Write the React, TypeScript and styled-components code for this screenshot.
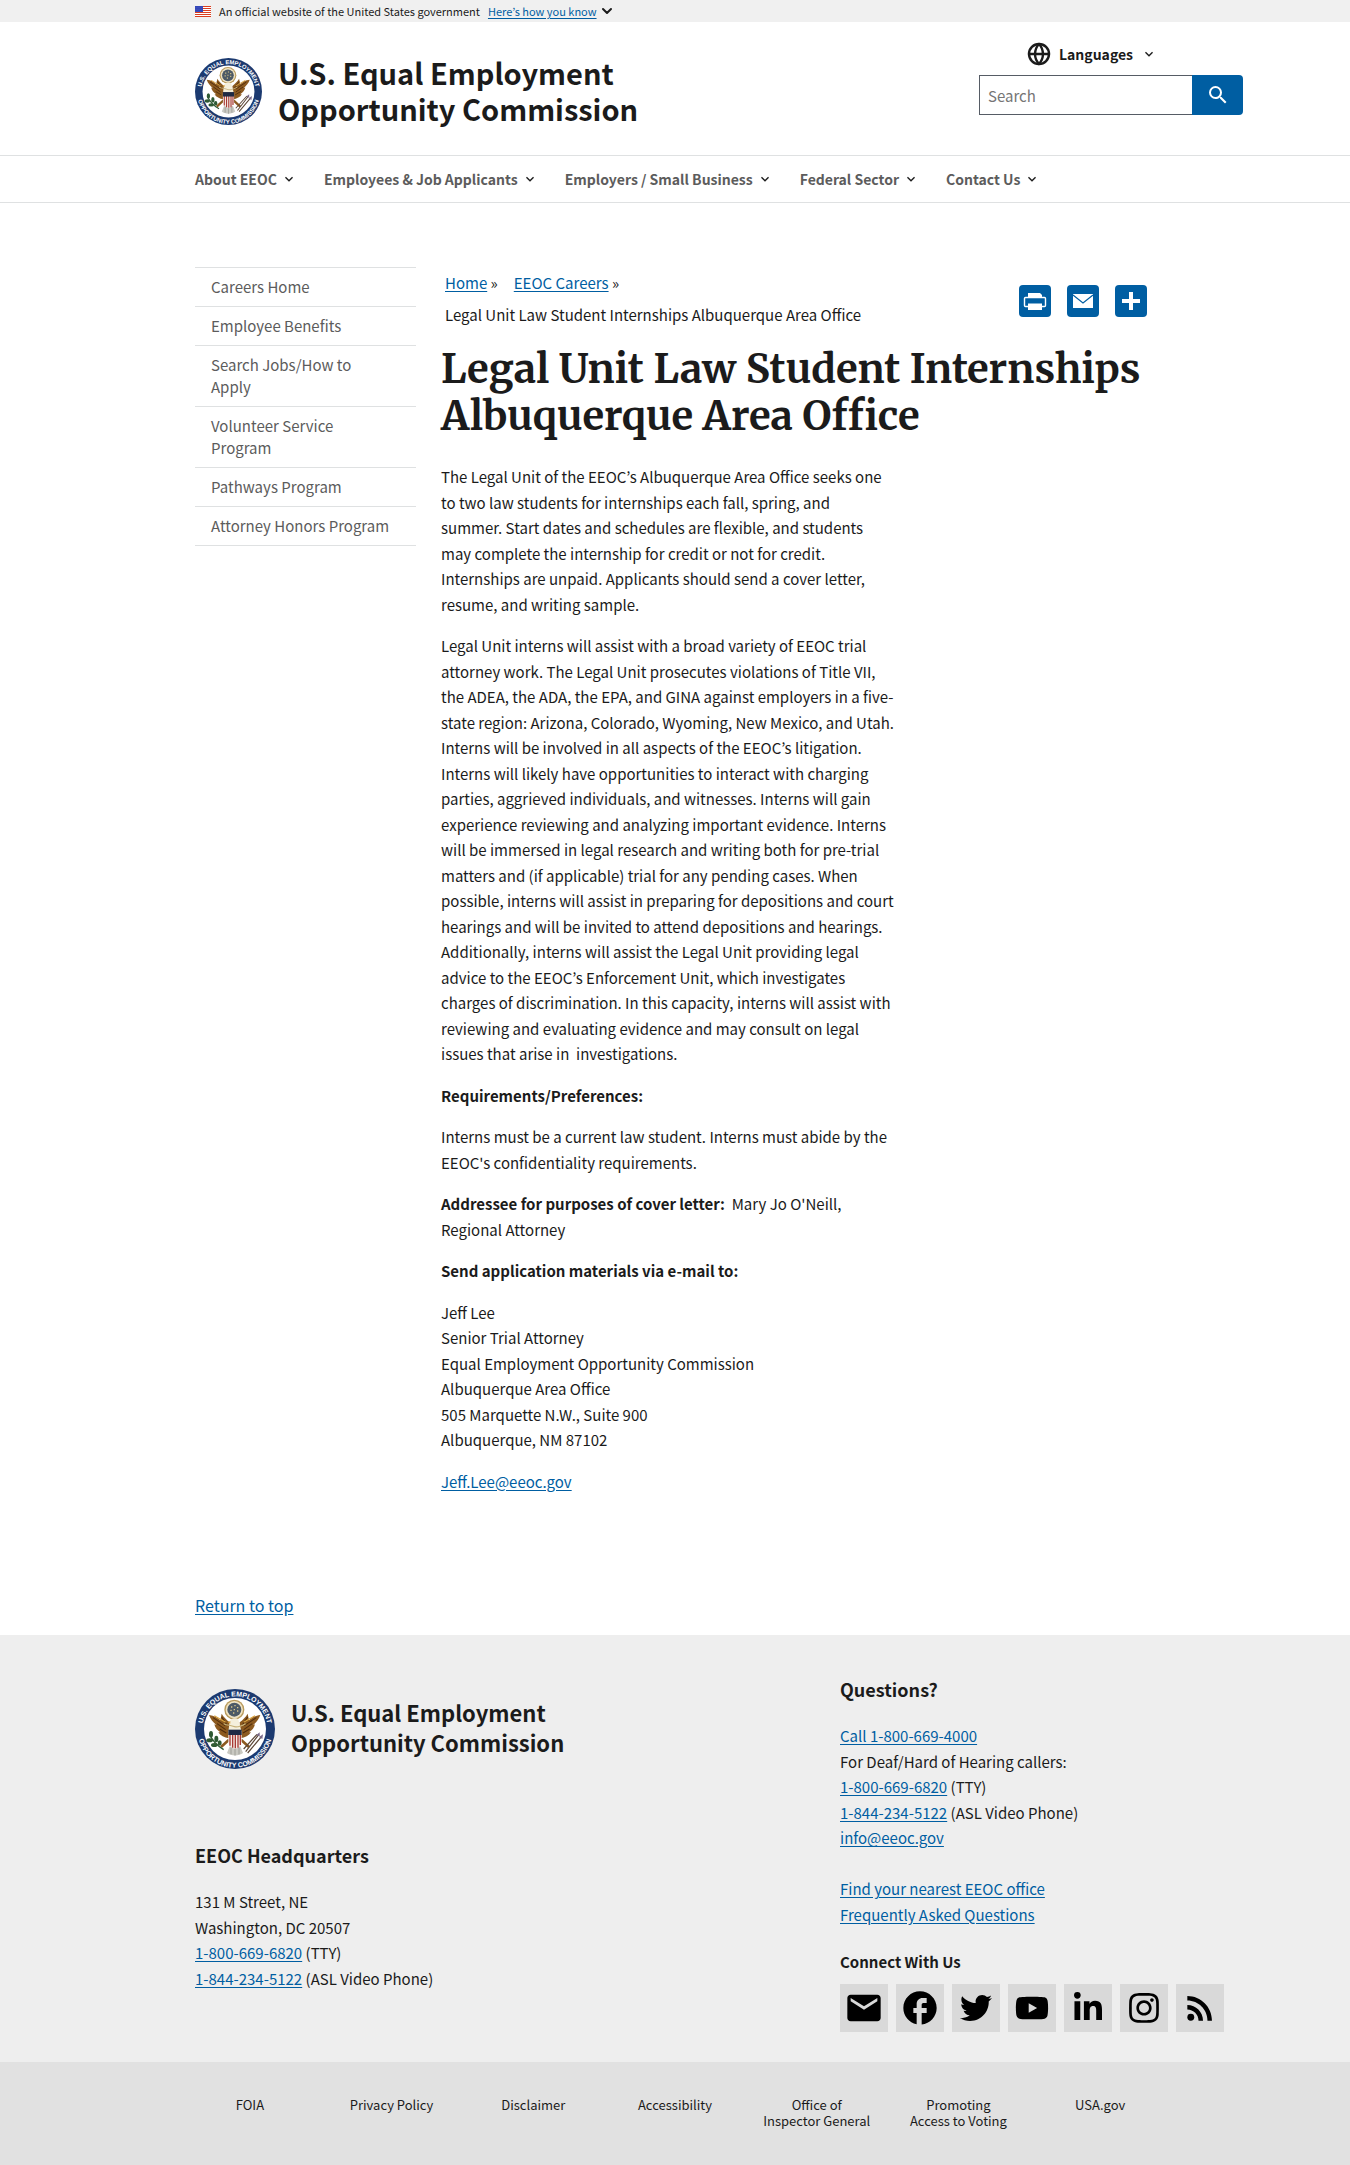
import React from "react";
import styled, { createGlobalStyle } from "styled-components";
import {
  MdEmail,
  MdExpandMore,
  MdFacebook,
  MdRssFeed,
  MdSearch,
} from "react-icons/md";
import { FaInstagram, FaLinkedinIn, FaTwitter, FaYoutube } from "react-icons/fa";
import { FiChevronDown, FiGlobe } from "react-icons/fi";

const sans = `"Source Sans Pro", "Noto Sans CJK KR", "Noto Sans", sans-serif`;
const serif = `"Merriweather", "DejaVu Serif Condensed", "DejaVu Serif", serif`;

const color = {
  ink: "#1b1b1b",
  link: "#005ea2",
  muted: "#5c5c5c",
  line: "#dfe1e2",
  footer: "#eeeeee",
  footerBar: "#e1e1e1",
  tile: "#d9d9d9",
};

const GlobalStyle = createGlobalStyle`
  * { box-sizing: border-box; }
  body { margin: 0; background: #fff; color: ${color.ink}; font: 15px/1.7 ${sans}; }
  h1, h2, h3, p, ul, ol { margin: 0; padding: 0; }
  ul, ol { list-style: none; }
  button, input { font-family: inherit; }
  a { color: ${color.link}; text-underline-offset: 2px; }
`;

const Container = styled.div`
  max-width: 1024px;
  margin: 0 auto;
  padding: 0 32px;
`;

/* Government banner */

const Banner = styled.section`
  background: #f0f0f0;
`;

const BannerRow = styled(Container)`
  display: flex;
  align-items: center;
  height: 22px;
  font-size: 11px;
  line-height: 22px;
`;

const BannerText = styled.p`
  && { margin: 0 8px; }
`;

const BannerToggle = styled.button`
  display: flex;
  align-items: center;
  gap: 2px;
  padding: 0;
  border: 0;
  background: none;
  color: ${color.link};
  font-size: 11px;
  line-height: 22px;
  text-decoration: underline;
  text-underline-offset: 2px;
  svg { color: ${color.ink}; }
`;

/* Header */

const HeaderRow = styled(Container)`
  display: flex;
  justify-content: space-between;
  height: 133px;
`;

const Brand = styled.a`
  display: flex;
  align-items: center;
  gap: 16px;
  margin-top: 6px;
  color: ${color.ink};
  text-decoration: none;
`;

const BrandName = styled.span<{ $small?: boolean }>`
  padding-bottom: 4px;
  font-size: ${(p) => (p.$small ? 22 : 29)}px;
  line-height: ${(p) => (p.$small ? 30 : 36)}px;
  font-weight: 700;
`;

const HeaderTools = styled.div`
  width: 264px;
  margin-right: -88px;
  padding-top: 16px;
`;

const LanguageButton = styled.button`
  display: flex;
  align-items: center;
  gap: 8px;
  height: 32px;
  margin: 0 0 5px 48px;
  padding: 0;
  border: 0;
  background: none;
  color: ${color.ink};
  font-size: 14px;
  font-weight: 700;
`;

const SearchForm = styled.form`
  display: flex;
  height: 40px;
`;

const SearchInput = styled.input`
  flex: 1;
  min-width: 0;
  padding: 0 8px;
  border: 1px solid #565c65;
  border-right: 0;
  border-radius: 0;
  font-size: 15px;
  &::placeholder { color: #757575; }
`;

const SearchButton = styled.button`
  display: flex;
  align-items: center;
  justify-content: center;
  width: 51px;
  padding: 0;
  border: 0;
  border-radius: 0 4px 4px 0;
  background: ${color.link};
  color: #fff;
`;

const MainNav = styled.nav`
  border-top: 1px solid ${color.line};
  border-bottom: 1px solid ${color.line};
`;

const NavList = styled(Container).attrs({ as: "ul" })`
  && { margin: 0 auto; padding: 0 32px; }
  display: flex;
  gap: 27px;
`;

const NavButton = styled.button`
  display: flex;
  align-items: center;
  gap: 4px;
  height: 46px;
  padding: 0;
  border: 0;
  background: none;
  color: ${color.muted};
  font-size: 14px;
  font-weight: 700;
  white-space: nowrap;
  svg { color: ${color.ink}; }
`;

/* Page body */

const Page = styled(Container)`
  display: flex;
  gap: 25px;
  padding-top: 64px;
`;

const SideNav = styled.nav`
  flex: 0 0 221px;
  border-bottom: 1px solid ${color.line};
  align-self: flex-start;
`;

const SideItem = styled.li`
  border-top: 1px solid ${color.line};
`;

const SideLink = styled.a`
  display: block;
  padding: 8px 24px 8px 16px;
  color: ${color.muted};
  line-height: 22px;
  text-decoration: none;
`;

const Main = styled.main`
  flex: 1;
  min-width: 0;
`;

const TopLine = styled.div`
  display: flex;
  justify-content: space-between;
  align-items: flex-start;
  padding-right: 8px;
`;

const Crumbs = styled.ol`
  && { padding: 0 4px; }
  display: flex;
  flex-wrap: wrap;
  column-gap: 16px;
  max-width: 480px;
  line-height: 32px;
`;

const Share = styled.ul`
  && { padding-top: 18px; }
  display: flex;
  gap: 16px;
`;

const ShareLink = styled.a`
  display: block;
  width: 32px;
  height: 32px;
  border-radius: 4px;
  background: ${color.link};
  svg { display: block; }
`;

const Title = styled.h1`
  && { margin: 15px 0 24px; }
  font: 700 40px/47px ${serif};
`;

const Prose = styled.div`
  max-width: 455px;
  p + p { margin-top: 16px; }
`;

const ReturnRow = styled(Container)`
  padding-top: 98px;
  padding-bottom: 16px;
  font-size: 16px;
`;

/* Footer */

const Footer = styled.footer`
  background: ${color.footer};
`;

const FooterGrid = styled(Container)`
  display: grid;
  grid-template-columns: 645px minmax(0, 1fr);
  padding-top: 40px;
  padding-bottom: 30px;
`;

const FooterBrand = styled(Brand)`
  margin: 14px 0 72px;
`;

const FooterHeading = styled.h2`
  && { margin-bottom: 20px; }
  font-size: 18px;
  line-height: 28px;
`;

const SocialHeading = styled.h3`
  && { margin: 22px 0 9px; }
  font-size: 15px;
  line-height: 26px;
`;

const Social = styled.ul`
  display: flex;
  gap: 8px;
`;

const SocialLink = styled.a`
  display: flex;
  align-items: center;
  justify-content: center;
  width: 48px;
  height: 48px;
  background: ${color.tile};
  color: #000;
`;

const FooterBar = styled.div`
  background: ${color.footerBar};
`;

const FooterLinks = styled.ul`
  && { margin: 0 auto; padding: 35px 0 44px; }
  display: grid;
  grid-template-columns: repeat(7, 1fr);
  max-width: 992px;
  text-align: center;
  font-size: 13px;
  line-height: 16px;
  a { display: block; padding: 0 8px; color: ${color.ink}; text-decoration: none; white-space: pre-line; }
`;

function Flag() {
  return (
    <svg width="16" height="11" viewBox="0 0 16 11" aria-hidden="true">
      <rect width="16" height="11" fill="#fff" />
      {[0, 2, 4, 6, 8, 10].map((y) => (
        <rect key={y} y={y} width="16" height="1" fill="#db3e1f" />
      ))}
      <rect width="8" height="6" fill="#1e33b1" />
      {[1, 3, 5].map((y) =>
        [1, 3, 5, 7].map((x) => (
          <circle key={`${x}-${y}`} cx={x} cy={y} r="0.4" fill="#fff" />
        )),
      )}
    </svg>
  );
}

function Seal({ size, id }: { size: number; id: string }) {
  return (
    <svg width={size} height={size} viewBox="0 0 120 120" role="img" aria-label="EEOC seal">
      <defs>
        <path id={`${id}-top`} d="M11.6 66 A48.8 48.8 0 1 1 108.4 66" />
        <path id={`${id}-bottom`} d="M4 62 A56 56 0 0 0 116 62" />
      </defs>
      <circle cx="60" cy="60" r="60" fill="#1c3a70" />
      <circle cx="60" cy="60" r="46.5" fill="#fff" />
      <g fill="#fff" fontFamily="Liberation Sans, sans-serif" fontWeight="700" fontSize="10.5">
        <text textAnchor="middle">
          <textPath href={`#${id}-top`} startOffset="50%">U.S. EQUAL EMPLOYMENT</textPath>
        </text>
        <text textAnchor="middle">
          <textPath href={`#${id}-bottom`} startOffset="50%">OPPORTUNITY COMMISSION</textPath>
        </text>
      </g>
      {/* glory of stars above the eagle */}
      <circle cx="59" cy="31" r="15" fill="#b99a5b" />
      <circle cx="59" cy="31" r="13" fill="#efe3c4" />
      <circle cx="59" cy="31" r="10.5" fill="#4d5a66" />
      <path d="M54 27h2M59 25h2M63 28h2M53 32h2M58 31h2M63 33h2M57 36h2" stroke="#d9c68a" strokeWidth="2" />
      {/* wings */}
      <path
        d="M21 39c8 1 13 4 17 8l2-10c3 5 7 9 12 13l-1 24c-7-1-13-4-16-9l3 0c-5-3-8-7-9-12l3 1c-5-4-9-9-11-15z"
        fill="#8c5a20"
      />
      <path
        d="M98 39c-8 1-13 4-17 8l-2-10c-3 5-7 9-12 13l1 24c7-1 13-4 16-9l-3 0c5-3 8-7 9-12l-3 1c5-4 9-9 11-15z"
        fill="#8c5a20"
      />
      <path
        d="M27 43l18 12M33 52l13 9M37 60l10 6M40 42l8 12M92 43l-18 12M86 52l-13 9M82 60l-10 6M79 42l-8 12"
        stroke="#4f2c0c"
        strokeWidth="1.6"
        fill="none"
      />
      <path d="M29 40l17 10M90 40l-17 10" stroke="#d9a441" strokeWidth="1.6" />
      {/* head and neck */}
      <path d="M52 49c1-4 5-6 9-5 3 0 5 3 5 6l4 14H50z" fill="#f5efdc" />
      <path d="M53 48l-4 2 4 2z" fill="#d9a441" />
      <path d="M43 52c6 3 9 2 14 4s10 1 19-4" stroke="#c8b27a" strokeWidth="1.6" fill="none" />
      {/* tail and legs */}
      <path d="M52 86h16l4 10c-6 5-18 5-24 0z" fill="#c9c9c2" />
      <path d="M54 88v10M60 88v12M66 88v10" stroke="#8a8a82" strokeWidth="1" />
      <path d="M51 76l-12 11M69 76l12 11" stroke="#8c5a20" strokeWidth="4" />
      {/* olive branch and arrows */}
      <path d="M22 68c4 10 11 17 21 23" stroke="#2f5a34" strokeWidth="2" fill="none" />
      <g fill="#2f5a34">
        <ellipse cx="24" cy="68" rx="3" ry="5" />
        <ellipse cx="22" cy="77" rx="5" ry="3" />
        <ellipse cx="32" cy="75" rx="3" ry="5" />
        <ellipse cx="29" cy="84" rx="5" ry="3" />
        <ellipse cx="37" cy="81" rx="3" ry="4" />
      </g>
      <path d="M76 94l20-26M79 96l21-25M73 90l20-22" stroke="#5b4636" strokeWidth="1.8" />
      <path d="M92 69l5-4 0 6zM96 72l6-4-1 7z" fill="#7a6a8a" />
      {/* shield */}
      <path d="M50 63h20v16c0 6-5 9-10 11-5-2-10-5-10-11z" fill="#f4ece6" />
      <path d="M52.5 68v17M56.5 68v20M60.5 68v21M64.5 68v20M68 68v16" stroke="#a83a34" strokeWidth="2" />
      <path d="M50 61h20v8H50z" fill="#1f2a44" />
    </svg>
  );
}

function PrintIcon() {
  return (
    <svg width="32" height="32" viewBox="0 0 32 32" aria-hidden="true">
      <rect x="5.5" y="12.5" width="21" height="9" rx="1" fill="none" stroke="#fff" strokeWidth="1.4" />
      <path fill="#fff" d="M9 8h12l2 2v3H9zM9 18.500h14V25H9z" />
    </svg>
  );
}

function MailIcon() {
  return (
    <svg width="32" height="32" viewBox="0 0 32 32" aria-hidden="true">
      <path fill="#fff" d="M6 9h20v14H6z" />
      <path d="M6 10l10 8 10-8" fill="none" stroke={color.link} strokeWidth="1.2" />
    </svg>
  );
}

function PlusIcon() {
  return (
    <svg width="32" height="32" viewBox="0 0 32 32" aria-hidden="true">
      <path fill="#fff" d="M14 7h4v7h7v4h-7v7h-4v-7H7v-4h7z" />
    </svg>
  );
}

const navItems = [
  "About EEOC",
  "Employees & Job Applicants",
  "Employers / Small Business",
  "Federal Sector",
  "Contact Us",
];

const sideItems = [
  "Careers Home",
  "Employee Benefits",
  "Search Jobs/How to Apply",
  "Volunteer Service Program",
  "Pathways Program",
  "Attorney Honors Program",
];

const shareItems = [
  { label: "Print", icon: <PrintIcon /> },
  { label: "Email", icon: <MailIcon /> },
  { label: "Share", icon: <PlusIcon /> },
];

const socialItems = [
  { label: "Email", icon: <MdEmail size={40} /> },
  { label: "Facebook", icon: <MdFacebook size={40} /> },
  { label: "Twitter", icon: <FaTwitter size={32} /> },
  { label: "YouTube", icon: <FaYoutube size={34} /> },
  { label: "LinkedIn", icon: <FaLinkedinIn size={32} /> },
  { label: "Instagram", icon: <FaInstagram size={34} /> },
  { label: "RSS", icon: <MdRssFeed size={38} /> },
];

const footerLinks = [
  "FOIA",
  "Privacy Policy",
  "Disclaimer",
  "Accessibility",
  "Office of\nInspector General",
  "Promoting\nAccess to Voting",
  "USA.gov",
];

export default function App() {
  return (
    <>
      <GlobalStyle />
      <Banner aria-label="Official government website">
        <BannerRow>
          <Flag />
          <BannerText>An official website of the United States government</BannerText>
          <BannerToggle type="button">
            Here’s how you know
            <FiChevronDown size={16} strokeWidth={3} />
          </BannerToggle>
        </BannerRow>
      </Banner>

      <header id="top">
        <HeaderRow>
          <Brand href="#top">
            <Seal size={67} id="header-seal" />
            <BrandName>
              U.S. Equal Employment
              <br />
              Opportunity Commission
            </BrandName>
          </Brand>
          <HeaderTools>
            <LanguageButton type="button">
              <FiGlobe size={24} strokeWidth={2.4} />
              Languages
              <MdExpandMore size={16} />
            </LanguageButton>
            <SearchForm role="search">
              <SearchInput type="search" placeholder="Search" aria-label="Search" />
              <SearchButton type="submit" aria-label="Submit search">
                <MdSearch size={24} />
              </SearchButton>
            </SearchForm>
          </HeaderTools>
        </HeaderRow>
        <MainNav aria-label="Main">
          <NavList>
            {navItems.map((item) => (
              <li key={item}>
                <NavButton type="button">
                  {item}
                  <MdExpandMore size={16} />
                </NavButton>
              </li>
            ))}
          </NavList>
        </MainNav>
      </header>

      <Page>
        <SideNav aria-label="Careers">
          <ul>
            {sideItems.map((item) => (
              <SideItem key={item}>
                <SideLink href="#top">{item}</SideLink>
              </SideItem>
            ))}
          </ul>
        </SideNav>
        <Main>
          <TopLine>
            <Crumbs aria-label="Breadcrumb">
              <li><a href="#top">Home</a> »</li>
              <li><a href="#top">EEOC Careers</a> »</li>
              <li>Legal Unit Law Student Internships Albuquerque Area Office</li>
            </Crumbs>
            <Share>
              {shareItems.map((item) => (
                <li key={item.label}>
                  <ShareLink href="#top" aria-label={item.label}>{item.icon}</ShareLink>
                </li>
              ))}
            </Share>
          </TopLine>
          <Title>Legal Unit Law Student Internships Albuquerque Area Office</Title>
          <Prose>
            <p>
              The Legal Unit of the EEOC’s Albuquerque Area Office seeks one to two law
              students for internships each fall, spring, and summer.&nbsp;Start dates and
              schedules are flexible, and students may complete the internship for credit or
              not for credit. Internships are unpaid. Applicants should send a cover letter,
              resume, and writing sample.
            </p>
            <p>
              Legal Unit interns will assist with a broad variety of EEOC trial attorney work.
              The Legal Unit prosecutes violations of Title VII, the ADEA, the ADA, the EPA,
              and GINA against employers in a five-state region: Arizona, Colorado, Wyoming,
              New Mexico, and Utah. Interns will be involved in all aspects of the EEOC’s
              litigation. Interns will likely have opportunities to interact with charging
              parties, aggrieved individuals, and witnesses. Interns will gain experience
              reviewing and analyzing important evidence. Interns will be immersed in legal
              research and writing both for pre-trial matters and (if applicable) trial for
              any pending cases. When possible, interns will assist in preparing for
              depositions and court hearings and will be invited to attend depositions and
              hearings. Additionally, interns will assist the Legal Unit providing legal
              advice to the EEOC’s Enforcement Unit, which investigates charges of
              discrimination. In this capacity, interns will assist with reviewing and
              evaluating evidence and may consult on legal issues that arise in&nbsp;
              investigations.
            </p>
            <p><strong>Requirements/Preferences:</strong></p>
            <p>
              Interns must be a current law student. Interns must abide by the EEOC's
              confidentiality requirements.
            </p>
            <p>
              <strong>Addressee for purposes of cover letter:</strong>&nbsp; Mary Jo O'Neill,
              Regional Attorney
            </p>
            <p><strong>Send application materials via e-mail to:</strong></p>
            <p>
              Jeff Lee
              <br />
              Senior Trial Attorney
              <br />
              Equal Employment Opportunity Commission
              <br />
              Albuquerque Area Office
              <br />
              505 Marquette N.W., Suite 900
              <br />
              Albuquerque, NM 87102
            </p>
            <p><a href="mailto:Jeff.Lee@eeoc.gov">Jeff.Lee@eeoc.gov</a></p>
          </Prose>
        </Main>
      </Page>

      <ReturnRow>
        <a href="#top">Return to top</a>
      </ReturnRow>

      <Footer>
        <FooterGrid>
          <div>
            <FooterBrand href="#top">
              <Seal size={80} id="footer-seal" />
              <BrandName $small>
                U.S. Equal Employment
                <br />
                Opportunity Commission
              </BrandName>
            </FooterBrand>
            <FooterHeading>EEOC Headquarters</FooterHeading>
            <p>
              131 M Street, NE
              <br />
              Washington, DC 20507
              <br />
              <a href="tel:1-800-669-6820">1-800-669-6820</a> (TTY)
              <br />
              <a href="tel:1-844-234-5122">1-844-234-5122</a> (ASL Video Phone)
            </p>
          </div>
          <div>
            <FooterHeading>Questions?</FooterHeading>
            <p>
              <a href="tel:1-800-669-4000">Call 1-800-669-4000</a>
              <br />
              For Deaf/Hard of Hearing callers:
              <br />
              <a href="tel:1-800-669-6820">1-800-669-6820</a> (TTY)
              <br />
              <a href="tel:1-844-234-5122">1-844-234-5122</a> (ASL Video Phone)
              <br />
              <a href="mailto:info@eeoc.gov">info@eeoc.gov</a>
              <br />
              <br />
              <a href="#top">Find your nearest EEOC office</a>
              <br />
              <a href="#top">Frequently Asked Questions</a>
            </p>
            <SocialHeading>Connect With Us</SocialHeading>
            <Social>
              {socialItems.map((item) => (
                <li key={item.label}>
                  <SocialLink href="#top" aria-label={item.label}>{item.icon}</SocialLink>
                </li>
              ))}
            </Social>
          </div>
        </FooterGrid>
        <FooterBar>
          <FooterLinks>
            {footerLinks.map((item) => (
              <li key={item}><a href="#top">{item}</a></li>
            ))}
          </FooterLinks>
        </FooterBar>
      </Footer>
    </>
  );
}
